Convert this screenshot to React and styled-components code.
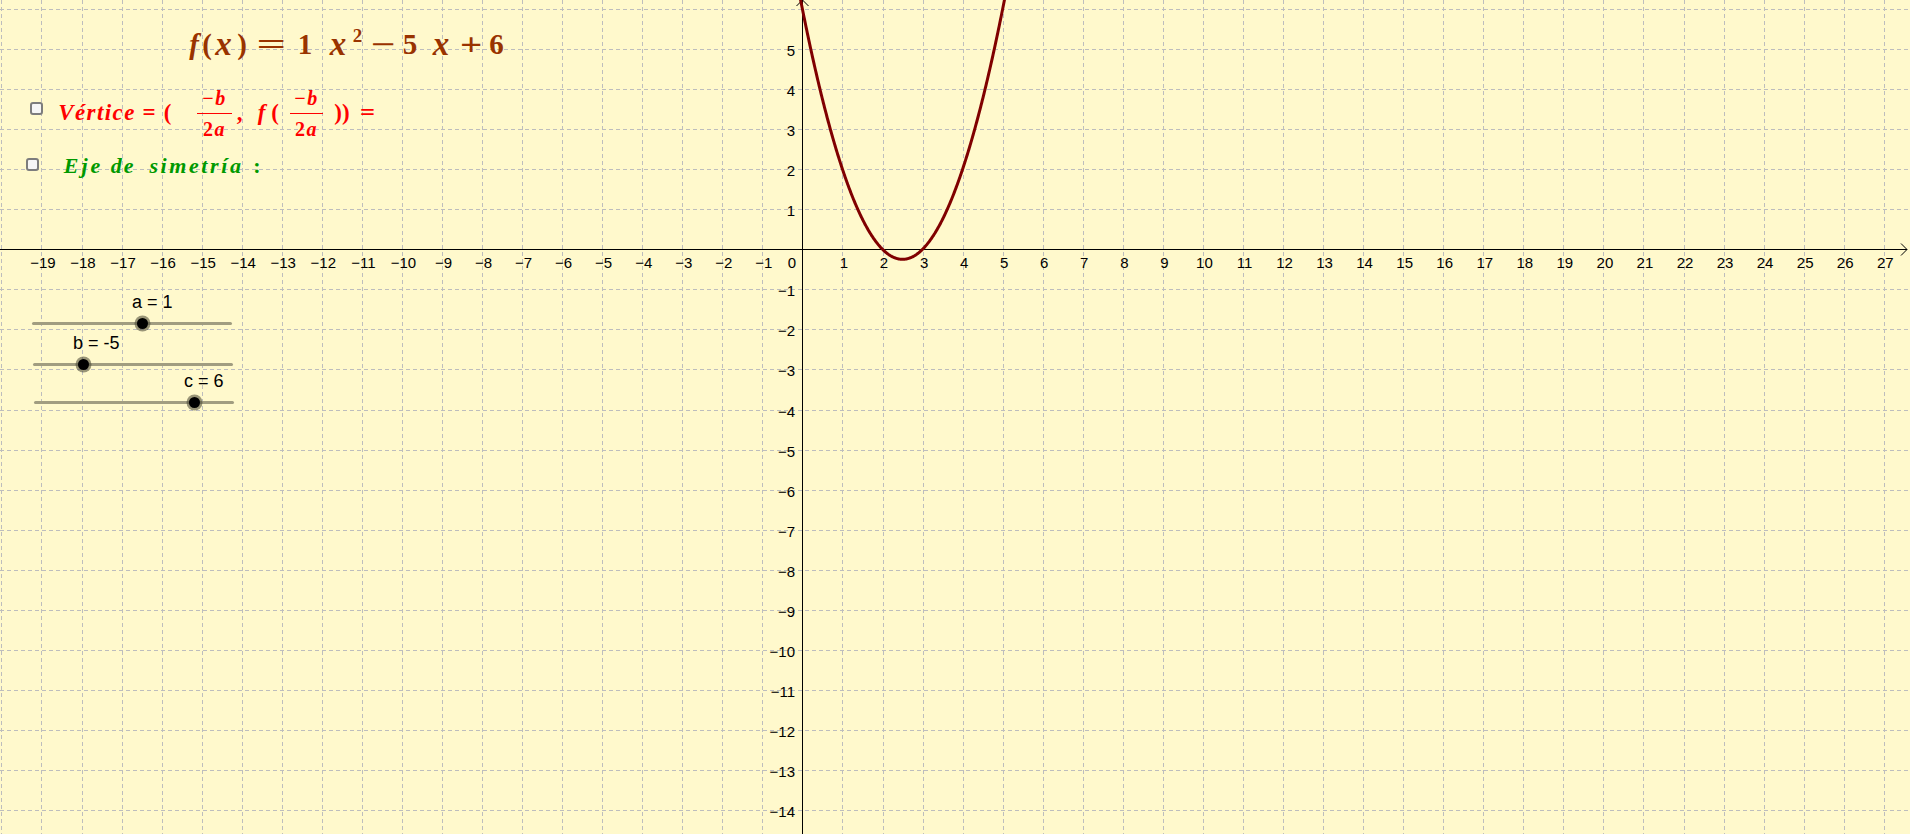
import React from 'react'
import styled, { createGlobalStyle } from 'styled-components'

const W = 1910
const H = 834
const OX = 802.4
const OY = 249.3
const UNIT = 40.05

const BG = '#fff9cc'

const GlobalStyle = createGlobalStyle`
  html, body {
    margin: 0;
    padding: 0;
    overflow: hidden;
    background: ${BG};
  }
  body {
    font-family: 'Liberation Sans', Arial, sans-serif;
  }
`

const Applet = styled.div`
  position: relative;
  width: ${W}px;
  height: ${H}px;
  overflow: hidden;
  background: ${BG};
`

const Graph = styled.svg`
  display: block;
`

const AxisLabel = styled.text`
  font-family: 'Liberation Sans', Arial, sans-serif;
  font-size: 15px;
  fill: #000;
`

const MathRow = styled.div`
  position: absolute;
  left: ${p => p.$x}px;
  top: ${p => p.$cy - 30}px;
  height: 60px;
  display: flex;
  align-items: center;
  color: ${p => p.$color};
  font-family: 'Liberation Serif', 'Times New Roman', serif;
  font-weight: bold;
  font-size: ${p => p.$size}px;
  white-space: nowrap;
`

const Piece = styled.span`
  flex: none;
  display: inline-flex;
  justify-content: center;
  width: ${p => p.$w}px;
  margin-left: ${p => p.$ml}px;
  margin-bottom: ${p => (p.$lift || 0) * 2}px;
  font-style: ${p => (p.$it ? 'italic' : 'normal')};
  font-size: ${p => (p.$size ? `${p.$size}px` : 'inherit')};
  letter-spacing: ${p => p.$ls || 0}px;
`

const Glyph = styled.span`
  display: inline-block;
  transform: scale(${p => p.$sx || 1}, ${p => p.$sy || 1});
`

const Frac = styled.span`
  flex: none;
  display: inline-flex;
  flex-direction: column;
  align-items: center;
  width: ${p => p.$w}px;
  margin-left: ${p => p.$ml}px;
  font-size: 20px;
`

const FracPart = styled.span`
  line-height: 16px;
  padding: ${p => (p.$top ? '0 0 7px' : '7px 0 0')};
  letter-spacing: 1.5px;
`

const FracBar = styled.span`
  align-self: stretch;
  height: 0;
  border-top: 1.5px solid currentColor;
`

const Check = styled.input.attrs({ type: 'checkbox' })`
  appearance: none;
  flex: none;
  box-sizing: border-box;
  width: 13px;
  height: 13px;
  margin: 0 0 ${p => p.$lift * 2}px 0;
  border: 2px solid #7d7d7d;
  border-radius: 3px;
  background: #f6f6f6;
`

const Slider = styled.div`
  position: absolute;
  left: ${p => p.$x}px;
  top: ${p => p.$y - 1.5}px;
  width: 200px;
  height: 3px;
  border-radius: 2px;
  background: #a19d80;
`

const Thumb = styled.div`
  position: absolute;
  top: 1.5px;
  width: 0;
  height: 0;
`

const Knob = styled.span`
  position: absolute;
  left: -5.5px;
  top: -5.5px;
  width: 11px;
  height: 11px;
  border-radius: 50%;
  background: #000;
  box-shadow: 0 0 0 2.5px rgba(70, 68, 50, 0.55);
`

const SliderLabel = styled.span`
  position: absolute;
  left: -10px;
  top: -31px;
  font-family: 'Liberation Sans', Arial, sans-serif;
  font-size: 18px;
  line-height: 20px;
  color: #000;
  white-space: nowrap;
`

const px = v => Math.round(OX + v * UNIT) + 0.5
const py = v => Math.round(OY - v * UNIT) + 0.5
const f = x => x * x - 5 * x + 6

const minus = n => (n < 0 ? `\u2212${-n}` : `${n}`)

function gridPath() {
  let d = ''
  for (let k = -20; k <= 27; k++) {
    if (k !== 0) d += `M${px(k)} 0V${H}`
  }
  for (let j = 6; j >= -14; j--) {
    if (j !== 0) d += `M0 ${py(j)}H${W}`
  }
  return d
}

function curvePath() {
  const pts = []
  for (let x = -0.1; x <= 5.1001; x += 0.01) {
    pts.push(`${(OX + x * UNIT).toFixed(2)} ${(OY - f(x) * UNIT).toFixed(2)}`)
  }
  return 'M' + pts.join('L')
}

const xTicks = []
for (let k = -19; k <= 27; k++) if (k !== 0) xTicks.push(k)
const yTicks = []
for (let j = 5; j >= -14; j--) if (j !== 0) yTicks.push(j)

function Plane() {
  return (
    <Graph width={W} height={H} viewBox={`0 0 ${W} ${H}`}>
      <path d={gridPath()} stroke="#bdbdbd" strokeWidth="1" strokeDasharray="4 3" fill="none" />
      <path d={`M0 249.5H1907M802.5 0V${H}`} stroke="#000" strokeWidth="1" fill="none" />
      <path d="M1901 243.5L1907 249.5L1901 255.5M796.5 6L802.5 0L808.5 6" stroke="#000" strokeWidth="1" fill="none" />
      {xTicks.map(k => (
        <AxisLabel key={`x${k}`} x={OX + k * UNIT + 1.5} y={268} textAnchor="middle">
          {minus(k)}
        </AxisLabel>
      ))}
      <AxisLabel x={792} y={268} textAnchor="middle">0</AxisLabel>
      {yTicks.map(j => (
        <AxisLabel key={`y${j}`} x={795} y={OY - j * UNIT + 7} textAnchor="end">
          {minus(j)}
        </AxisLabel>
      ))}
      <path d={curvePath()} stroke="#800000" strokeWidth="3" fill="none" strokeLinejoin="round" />
    </Graph>
  )
}

const formula = [
  { t: 'f', l: 187, r: 201, it: true },
  { t: '(', l: 202, r: 212 },
  { t: 'x', l: 212, r: 235, it: true, size: 33 },
  { t: ')', l: 236, r: 248 },
  { t: '=', l: 255, r: 287, sx: 1.8 },
  { t: '1', l: 297, r: 313 },
  { t: 'x', l: 326, r: 350, it: true, size: 33 },
  { t: '2', l: 351, r: 364, size: 19, lift: 8 },
  { t: '\u2212', l: 370, r: 397, sx: 1.5 },
  { t: '5', l: 402, r: 418 },
  { t: 'x', l: 429, r: 453, it: true, size: 33 },
  { t: '+', l: 458, r: 485, sx: 1.35, sy: 1.1 },
  { t: '6', l: 489, r: 504 },
]

const vertice = [
  { t: 'Vértice', l: 56, r: 138, it: true, ls: 1.4 },
  { t: '=', l: 142, r: 156 },
  { t: '(', l: 163, r: 172 },
  { frac: true, l: 197, r: 232 },
  { t: ',', l: 236, r: 243 },
  { t: 'f', l: 255, r: 268, it: true },
  { t: '(', l: 270, r: 280 },
  { frac: true, l: 290, r: 323 },
  { t: '))', l: 331, r: 353 },
  { t: '=', l: 358, r: 377, sx: 1.15 },
]

const eje = [
  { t: 'Eje', l: 62, r: 105, it: true, ls: 3 },
  { t: 'de', l: 112, r: 134, it: true, ls: 2 },
  { t: 'simetría', l: 142, r: 251, it: true, ls: 2.6 },
  { t: ':', l: 253, r: 261 },
]

function Pieces({ items, start }) {
  let prev = start
  return items.map((it, i) => {
    const ml = it.l - prev
    prev = it.r
    if (it.frac) {
      return (
        <Frac key={i} $w={it.r - it.l} $ml={ml}>
          <FracPart $top>
            {'\u2212'}
            <i>b</i>
          </FracPart>
          <FracBar />
          <FracPart>
            2<i>a</i>
          </FracPart>
        </Frac>
      )
    }
    return (
      <Piece key={i} $w={it.r - it.l} $ml={ml} $it={it.it} $ls={it.ls} $size={it.size} $lift={it.lift}>
        <Glyph $sx={it.sx} $sy={it.sy}>{it.t}</Glyph>
      </Piece>
    )
  })
}

const sliders = [
  { name: 'a', value: 1, x: 32, y: 323 },
  { name: 'b', value: -5, x: 33, y: 364 },
  { name: 'c', value: 6, x: 34, y: 402 },
]

function ValueSlider({ name, value, x, y, min = -10, max = 10 }) {
  const pos = ((value - min) / (max - min)) * 100
  return (
    <Slider $x={x} $y={y}>
      <Thumb style={{ left: `${pos}%` }}>
        <Knob />
        <SliderLabel>{`${name} = ${value}`}</SliderLabel>
      </Thumb>
    </Slider>
  )
}

export default function App() {
  return (
    <Applet>
      <GlobalStyle />
      <Plane />
      <MathRow $x={187} $cy={44} $color="#993300" $size={29}>
        <Pieces items={formula} start={187} />
      </MathRow>
      <MathRow $x={30} $cy={113} $color="#ff0000" $size={23}>
        <Check $lift={5} />
        <Pieces items={vertice} start={43} />
      </MathRow>
      <MathRow $x={26} $cy={166} $color="#009900" $size={22}>
        <Check $lift={2} />
        <Pieces items={eje} start={39} />
      </MathRow>
      {sliders.map(s => (
        <ValueSlider key={s.name} {...s} />
      ))}
    </Applet>
  )
}
